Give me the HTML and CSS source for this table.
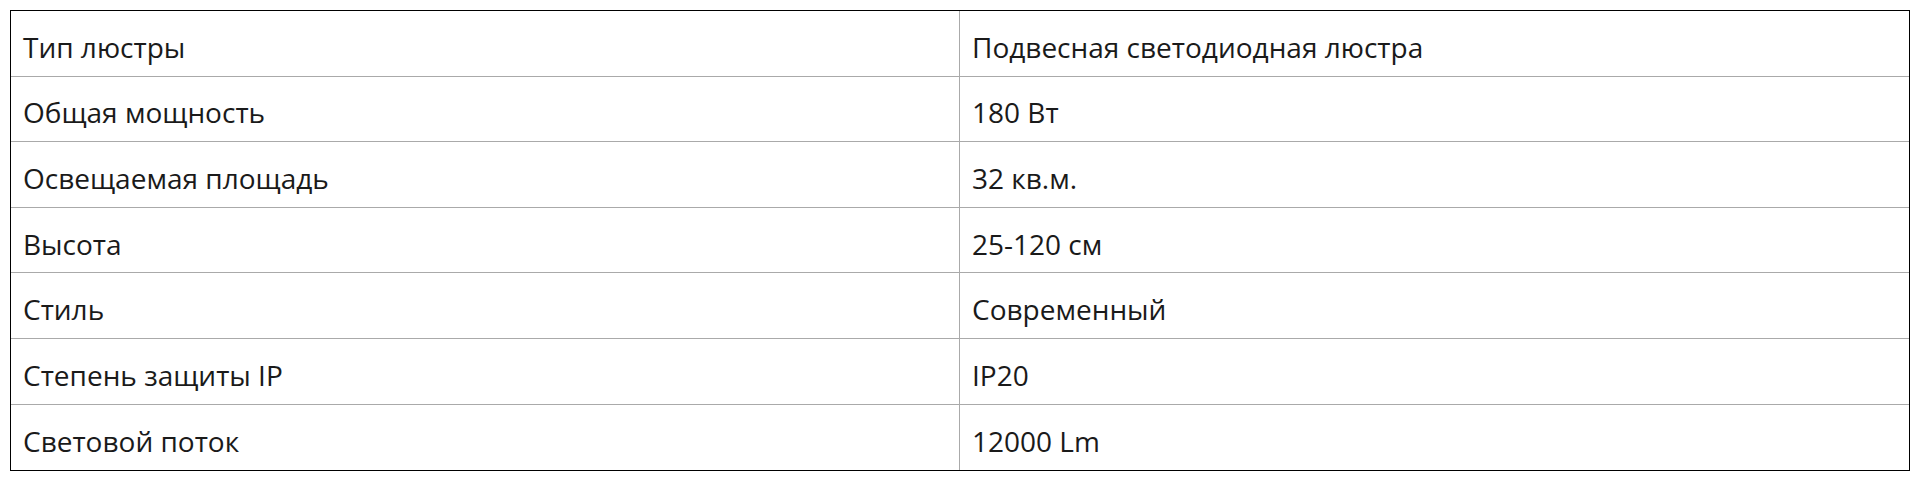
FILE: index.html
```html
<!DOCTYPE html>
<html lang="ru">
<head>
<meta charset="utf-8">
<link rel="stylesheet" href="styles.css">
</head>
<body>
<table class="specs">
  <tbody>
    <tr><td class="name">Тип люстры</td><td class="value">Подвесная светодиодная люстра</td></tr>
    <tr><td class="name">Общая мощность</td><td class="value">180 Вт</td></tr>
    <tr><td class="name">Освещаемая площадь</td><td class="value">32 кв.м.</td></tr>
    <tr><td class="name">Высота</td><td class="value">25-120 см</td></tr>
    <tr><td class="name">Стиль</td><td class="value">Современный</td></tr>
    <tr><td class="name">Степень защиты IP</td><td class="value">IP20</td></tr>
    <tr><td class="name">Световой поток</td><td class="value">12000 Lm</td></tr>
  </tbody>
</table>
</body>
</html>
```
FILE: styles.css
```css
html, body {
  margin: 0;
  padding: 0;
  background: #fff;
}
body {
  padding: 10px;
  font-family: "Open Sans", "Noto Sans", sans-serif;
  color: #1a1a1a;
}
.specs {
  width: 1900px;
  border-collapse: separate;
  border-spacing: 0;
  border: 1px solid #000;
  table-layout: fixed;
}
.specs td {
  width: 50%;
  height: 65.6px;
  box-sizing: border-box;
  padding: 7px 12px 0;
  vertical-align: middle;
  font-size: 28px;
  font-weight: 400;
  line-height: 36px;
  border-bottom: 1px solid #aaa;
}
.specs tr:last-child td {
  border-bottom: none;
}
.specs td.name {
  border-right: 1px solid #aaa;
}
```
